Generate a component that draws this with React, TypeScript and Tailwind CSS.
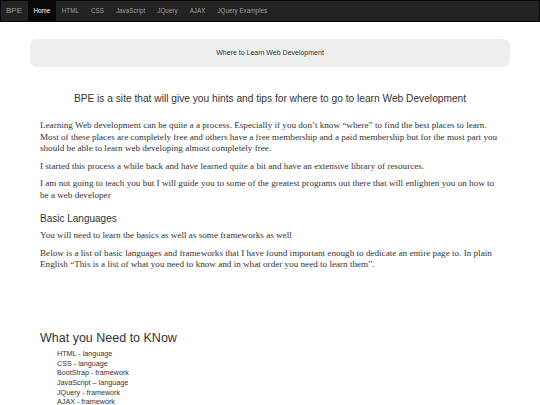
export default function App() {
  const links = ["HTML", "CSS", "JavaScript", "JQuery", "AJAX", "JQuery Examples"];
  const items = [
    "HTML - language",
    "CSS - language",
    "BootStrap - framework",
    "JavaScript \u2013 language",
    "JQuery - framework",
    "AJAX - framework",
  ];
  return (
    <div className="w-[540px] h-[405px] overflow-hidden bg-white text-[#333]" style={{ fontFamily: '"Liberation Sans", Arial, sans-serif' }}>
      <nav className="h-[22px] bg-[#222] border border-[#080808] flex items-stretch">
        <div className="pl-[5px] pr-[6px] flex items-center text-[8px] text-[#9d9d9d]">BPE</div>
        <div className="flex items-stretch">
          <div className="px-[5.5px] flex items-center bg-[#080808] text-white text-[6.3px]">Home</div>
          {links.map((l) => (
            <div key={l} className="px-[6px] flex items-center text-[#9d9d9d] text-[6.3px] whitespace-nowrap">{l}</div>
          ))}
        </div>
      </nav>
      <div className="mx-[30px] mt-[17px] h-[28px] rounded-[7px] bg-[#eee] flex items-center justify-center text-[7px] text-[#333]">
        Where to Learn Web Development
      </div>
      <div className="px-[40px]">
        <h1 className="text-center text-[10.2px] leading-[13px] mt-[25px] mb-[15px]">
          BPE is a site that will give you hints and tips for where to go to learn Web Development
        </h1>
        <div className="text-[9.15px] leading-[11.6px]" style={{ fontFamily: '"Liberation Serif", "Times New Roman", serif' }}>
          <p className="mb-[6px]">
            Learning Web development can be quite a a process. Especially if you don{"\u2019"}t know {"\u201C"}where{"\u201D"} to find the best places to learn. Most of these places are completely free and others have a free membership and a paid membership but for the most part you should be able to learn web developing almost completely free.
          </p>
          <p className="mb-[6px]">I started this process a while back and have learned quite a bit and have an extensive library of resources.</p>
          <p className="mb-[6px]">I am not going to teach you but I will guide you to some of the greatest programs out there that will enlighten you on how to be a web developer</p>
        </div>
        <h3 className="text-[10px] leading-[13px] mt-[10px] mb-[5px]">Basic Languages</h3>
        <div className="text-[9.15px] leading-[11.6px]" style={{ fontFamily: '"Liberation Serif", "Times New Roman", serif' }}>
          <p className="mb-[6.5px]">You will need to learn the basics as well as some frameworks as well</p>
          <p className="mb-[6px]">
            Below is a list of basic languages and frameworks that I have found important enough to dedicate an entire page to. In plain English {"\u201C"}This is a list of what you need to know and in what order you need to learn them{"\u201D"}.
          </p>
        </div>
        <h2 className="text-[12.5px] leading-[16px] mt-[59px] mb-[3px]">What you Need to KNow</h2>
        <ul className="pl-[17px] text-[7.2px] leading-[9.7px]">
          {items.map((i) => (
            <li key={i}>{i}</li>
          ))}
        </ul>
      </div>
    </div>
  );
}
